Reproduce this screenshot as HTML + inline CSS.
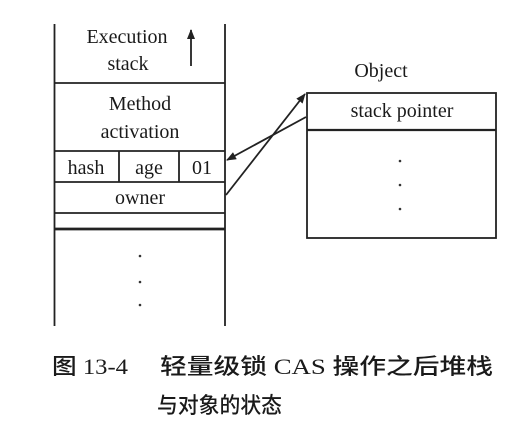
<!DOCTYPE html>
<html><head><meta charset="utf-8"><style>
html,body{margin:0;padding:0;background:#fff;width:527px;height:437px;overflow:hidden}
svg{display:block}
.t{font-family:"Liberation Serif",serif;font-size:20px;fill:#1a1a1a}
.c{font-family:"Liberation Serif","Noto Sans CJK SC",sans-serif;font-size:22px;fill:#1a1a1a;font-weight:500}
</style></head><body>
<svg width="527" height="437" viewBox="0 0 527 437">
<defs><marker id="a" markerWidth="10" markerHeight="8" refX="9" refY="4" orient="auto" markerUnits="userSpaceOnUse"><path d="M0,0 L10,4 L0,8 Z" fill="#222"/></marker></defs>
<g stroke="#222" stroke-width="1.8" fill="none">
<line x1="54.5" y1="24" x2="54.5" y2="326"/>
<line x1="225" y1="24" x2="225" y2="326"/>
<line x1="54" y1="83" x2="225" y2="83"/>
<line x1="54" y1="151" x2="225" y2="151"/>
<line x1="54" y1="182" x2="225" y2="182"/>
<line x1="54" y1="213" x2="225" y2="213"/>
<line x1="54" y1="229" x2="225" y2="229" stroke-width="2.8"/>
<line x1="119" y1="151" x2="119" y2="182"/>
<line x1="179" y1="151" x2="179" y2="182"/>
<rect x="307" y="93" width="189" height="145"/>
<line x1="307" y1="130" x2="496" y2="130" stroke-width="2.2"/>
<line x1="191" y1="66" x2="191" y2="30" marker-end="url(#a)"/>
<line x1="306" y1="117" x2="227" y2="160" marker-end="url(#a)"/>
<line x1="226" y1="195" x2="305" y2="94" marker-end="url(#a)"/>
</g>
<g fill="#333">
<circle cx="140" cy="256" r="1.3"/><circle cx="140" cy="282" r="1.3"/><circle cx="140" cy="305" r="1.3"/>
<circle cx="400" cy="161" r="1.3"/><circle cx="400" cy="185" r="1.3"/><circle cx="400" cy="209" r="1.3"/>
</g>
<text class="t" x="127" y="43" text-anchor="middle">Execution</text>
<text class="t" x="128" y="70" text-anchor="middle">stack</text>
<text class="t" x="140" y="110" text-anchor="middle">Method</text>
<text class="t" x="140" y="138" text-anchor="middle">activation</text>
<text class="t" x="86" y="174" text-anchor="middle">hash</text>
<text class="t" x="149" y="174" text-anchor="middle">age</text>
<text class="t" x="202" y="174" text-anchor="middle">01</text>
<text class="t" x="140" y="204" text-anchor="middle">owner</text>
<text class="t" x="381" y="77" text-anchor="middle">Object</text>
<text class="t" x="402" y="117" text-anchor="middle">stack pointer</text>
<text class="c" x="52" y="374" textLength="76" lengthAdjust="spacingAndGlyphs">图 13-4</text>
<text class="c" x="160" y="374" textLength="333" lengthAdjust="spacingAndGlyphs">轻量级锁 CAS 操作之后堆栈</text>
<text class="c" x="157" y="413" textLength="125" lengthAdjust="spacingAndGlyphs">与对象的状态</text>
</svg>
</body></html>
